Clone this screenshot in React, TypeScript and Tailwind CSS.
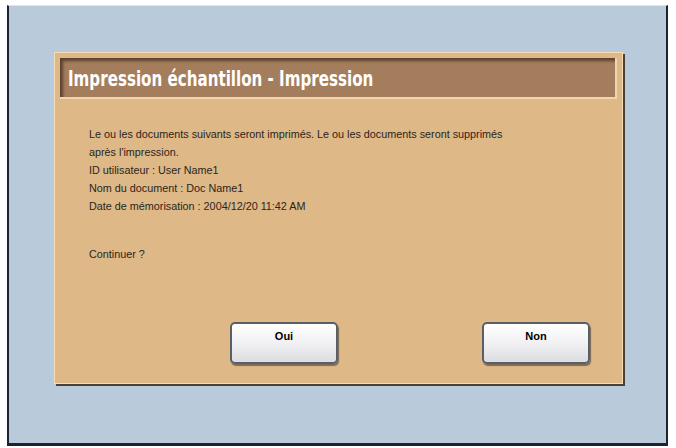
export default function App() {
  const lines = [
    "Le ou les documents suivants seront imprimés. Le ou les documents seront supprimés",
    "après l'impression.",
    "ID utilisateur : User Name1",
    "Nom du document : Doc Name1",
    "Date de mémorisation : 2004/12/20 11:42 AM",
  ];

  return (
    <div className="w-[676px] h-[448px] bg-white pl-[7px] pt-[5px] overflow-hidden">
      {/* blue panel */}
      <div className="w-[661px] h-[441px] bg-[#b9cadb] border-l-2 border-l-[#1c2230] border-r-2 border-r-[#1c2230] border-b-[3px] border-b-[#1c2230] border-t border-t-[#dbe5ee] pl-[45px] pt-[46px]">
        {/* dialog */}
        <div className="w-[569px] h-[332px] bg-[#deb886] border border-[#f3dcb6] shadow-[2px_2px_0_#4a4038] flex flex-col p-[5px]">
          {/* title bar */}
          <div className="h-[41px] bg-[#a47e5c] border-b-2 border-b-[#f0d6ad] border-r-2 border-r-[#f0d6ad] shadow-[inset_3px_3px_3px_#5d4230] flex items-center pl-[8px] pt-[3px]">
            <span
              className="text-white font-bold text-[21px] leading-none whitespace-nowrap origin-left scale-x-[0.8] inline-block"
              style={{ fontFamily: "'DejaVu Sans Condensed', 'DejaVu Sans', sans-serif", fontStretch: "condensed" }}
            >
              Impression échantillon - Impression
            </span>
          </div>

          {/* message */}
          <div
            className="pl-[29px] pt-[26px] text-[10.8px] leading-[18px] text-[#2a2520]"
            style={{ fontFamily: "'Liberation Sans', Arial, sans-serif" }}
          >
            {lines.map((l) => (
              <div key={l}>{l}</div>
            ))}
            <div className="mt-[30px]">Continuer ?</div>
          </div>

          {/* buttons */}
          <div className="mt-auto mb-[14px] flex pl-[170px] gap-[144px]">
            {["Oui", "Non"].map((b) => (
              <div
                key={b}
                className="w-[108px] h-[42px] rounded-[5px] border-2 border-[#5a5e66] bg-gradient-to-b from-[#ffffff] via-[#f1f1f3] to-[#dcdde2] shadow-[1px_2px_1px_#7a6a58] flex justify-center pt-[4px] text-[11px] font-bold text-black"
                style={{ fontFamily: "'Liberation Sans', Arial, sans-serif" }}
              >
                {b}
              </div>
            ))}
          </div>
        </div>
      </div>
    </div>
  );
}
